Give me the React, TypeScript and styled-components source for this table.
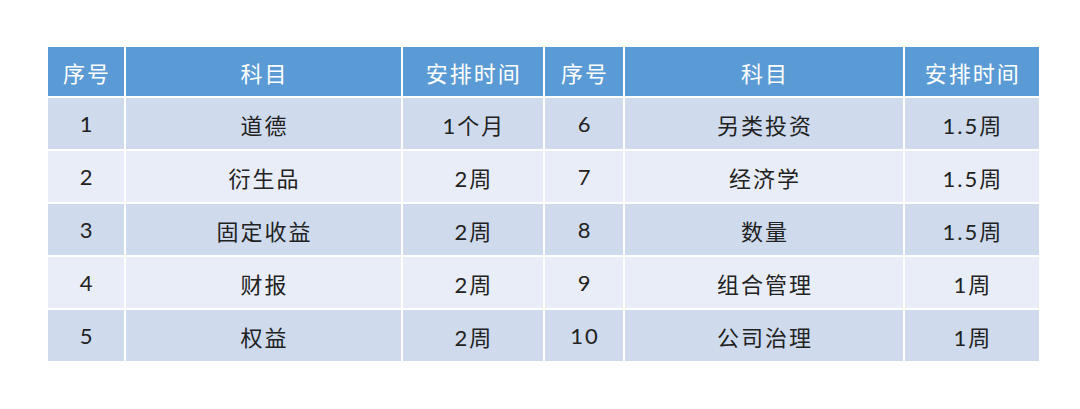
import styled, { createGlobalStyle } from 'styled-components';

const GlobalStyle = createGlobalStyle`
    body {
        margin: 0;
        background: #ffffff;
        font-family: Lato, "Noto Sans CJK SC", sans-serif;
    }
`

const rows = [
    ['1', '道德', '1个月', '6', '另类投资', '1.5周'],
    ['2', '衍生品', '2周', '7', '经济学', '1.5周'],
    ['3', '固定收益', '2周', '8', '数量', '1.5周'],
    ['4', '财报', '2周', '9', '组合管理', '1周'],
    ['5', '权益', '2周', '10', '公司治理', '1周'],
]

const headers = ['序号', '科目', '安排时间', '序号', '科目', '安排时间']
const widths = [77, 276, 142, 80, 279, 135]

const App = () => {
    return (
        <>
            <GlobalStyle />
            <Page>
                <Table>
                    <colgroup>
                        {widths.map((w, i) => <col key={i} style={{ width: w }} />)}
                    </colgroup>
                    <thead>
                        <tr>
                            {headers.map((h, i) => <HeadCell key={i}>{h}</HeadCell>)}
                        </tr>
                    </thead>
                    <tbody>
                        {rows.map((r, i) => (
                            <Row key={i} $odd={i % 2 === 0}>
                                {r.map((c, j) => <Cell key={j}>{c}</Cell>)}
                            </Row>
                        ))}
                    </tbody>
                </Table>
            </Page>
        </>
    );
};

export default App;

const Page = styled.div`
    width: 1080px;
    height: 409px;
    padding: 47px 0 0 48px;
    box-sizing: border-box;
`

const Table = styled.table`
    border-collapse: collapse;
    table-layout: fixed;
    width: 991px;
`

const HeadCell = styled.th`
    height: 49px;
    padding: 0 0 0 2px;
    background: #5b9bd5;
    color: #ffffff;
    font-weight: normal;
    font-size: 22px;
    letter-spacing: 2px;
    text-align: center;
    border: 2px solid #ffffff;
    border-top: none;
    &:first-child { border-left: none; }
    &:last-child { border-right: none; }
`

const Row = styled.tr<{ $odd: boolean }>`
    background: ${p => p.$odd ? '#cfdaed' : '#e8edf7'};
    &:last-child td { border-bottom: none; }
`

const Cell = styled.td`
    height: 51px;
    padding: 0 0 0 2px;
    color: #222222;
    font-size: 22px;
    letter-spacing: 2px;
    text-align: center;
    border: 2px solid #ffffff;
    &:first-child { border-left: none; }
    &:last-child { border-right: none; }
`
